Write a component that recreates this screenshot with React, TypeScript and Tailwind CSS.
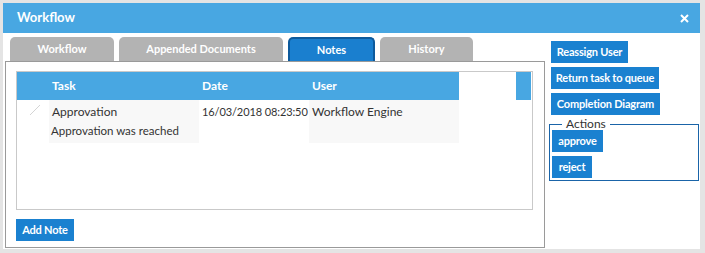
const font = { fontFamily: 'Lato, "Open Sans", sans-serif' };

function Btn({ label, className = '' }: { label: string; className?: string }) {
  return (
    <button className={`h-[22px] whitespace-nowrap bg-[#1a81d0] text-center text-[11px] font-bold tracking-[-0.2px] text-white ${className}`}>
      {label}
    </button>
  );
}

export default function App() {
  const tabs = ['Workflow', 'Appended Documents', 'Notes', 'History'];
  const tabWidths = ['w-[104px]', 'w-[164px]', 'w-[87px]', 'w-[93px]'];

  return (
    <div className="h-[253px] w-[705px] bg-[#e4e4e4] pl-[3px] pt-[3px]" style={font}>
      <div className="flex h-[246px] w-[697px] flex-col bg-white">
        {/* Header */}
        <div className="flex h-[30px] shrink-0 items-center justify-between bg-[#48a7e2] pl-[14px] pr-[10px]">
          <span className="text-[13px] font-bold text-white">Workflow</span>
          <svg width="9" height="9" viewBox="0 0 9 9" className="mr-[1px]">
            <path d="M1 1 L8 8 M8 1 L1 8" stroke="white" strokeWidth="2" />
          </svg>
        </div>

        <div className="flex flex-1">
          {/* Left: tabs + panel */}
          <div className="ml-[2px] flex w-[540px] flex-col pt-[4px]">
            <div className="flex gap-[5px] pl-[5px]">
              {tabs.map((t, i) => (
                <div
                  key={t}
                  className={`flex h-[24px] items-center justify-center rounded-t-[5px] text-[11px] font-bold text-white ${tabWidths[i]} ${
                    t === 'Notes' ? 'border-[2px] border-b-0 border-[#0d5a9c] bg-[#1a7fcf]' : 'bg-[#b3b3b3]'
                  }`}
                >
                  {t}
                </div>
              ))}
            </div>
            <div className="flex h-[187px] flex-col border border-[#9a9a9a] px-[10px] pt-[9px]">
              <div className="h-[139px] w-[517px] border border-[#c9c9c9]">
                <div className="flex h-[28px] text-[12px] font-bold text-white">
                  <div className="w-[32px] bg-[#48a7e2]" />
                  <div className="flex w-[150px] items-center bg-[#48a7e2] pl-[3px]">Task</div>
                  <div className="flex w-[110px] items-center bg-[#48a7e2] pl-[3px]">Date</div>
                  <div className="flex w-[150px] items-center bg-[#48a7e2] pl-[3px]">User</div>
                  <div className="w-[57px] bg-white" />
                  <div className="w-[15px] bg-[#48a7e2]" />
                </div>
                <div className="flex h-[43px] whitespace-nowrap text-[12px] text-[#333]">
                  <div className="w-[32px] pl-[12px] pt-[4px]">
                    <svg width="12" height="12" viewBox="0 0 12 12">
                      <path d="M1 11 L11 1" stroke="#d4d4d4" strokeWidth="1" />
                    </svg>
                  </div>
                  <div className="w-[150px] bg-[#f8f8f8] pl-[3px] pt-[3px] leading-[17px]">
                    <div>Approvation</div>
                    <div className="-ml-[1px] mt-[2px] text-[11.5px]">Approvation was reached</div>
                  </div>
                  <div className="w-[110px] overflow-hidden pl-[3px] pt-[3px] text-[11px] leading-[17px] tracking-[-0.1px]">16/03/2018 08:23:50</div>
                  <div className="w-[150px] bg-[#f8f8f8] pl-[3px] pt-[3px] leading-[17px]">Workflow Engine</div>
                </div>
              </div>
              <div className="mt-[6px]">
                <Btn label="Add Note" className="w-[58px]" />
              </div>
            </div>
          </div>

          {/* Right: actions */}
          <div className="ml-[4px] flex w-[150px] flex-col pt-[8px]">
            <div className="flex flex-col items-start gap-[4px] pl-[2px]">
              <Btn label="Reassign User" className="w-[77px]" />
              <Btn label="Return task to queue" className="w-[108px]" />
              <Btn label="Completion Diagram" className="w-[109px]" />
            </div>
            <fieldset className="mt-[3px] flex h-[63px] w-[150px] flex-col items-start gap-[4px] border border-[#1a64a8] px-[2px] pb-[2px]">
              <legend className="ml-[10px] px-[4px] text-[12px] leading-[12px] text-[#333]">Actions</legend>
              <Btn label="approve" className="w-[51px]" />
              <Btn label="reject" className="w-[40px]" />
            </fieldset>
          </div>
        </div>
      </div>
    </div>
  );
}
